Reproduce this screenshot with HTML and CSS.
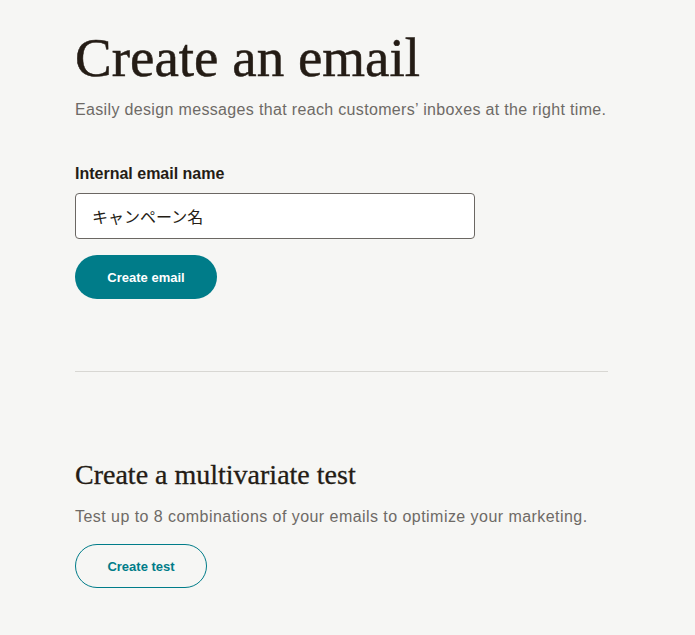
FILE: index.html
```html
<!DOCTYPE html>
<html lang="en">
<head>
<meta charset="utf-8">
<title>Create an email</title>
<link rel="stylesheet" href="styles.css">
</head>
<body>
<main class="page">
  <section class="create">
    <h1 class="title">Create an email</h1>
    <p class="lead">Easily design messages that reach customers’ inboxes at the right time.</p>
    <label class="label" for="name">Internal email name</label>
    <input class="field" id="name" type="text" value="キャンペーン名">
    <button class="btn btn-primary" type="button">Create email</button>
  </section>
  <hr class="divider">
  <section class="test">
    <h2 class="subtitle">Create a multivariate test</h2>
    <p class="lead lead-test">Test up to 8 combinations of your emails to optimize your marketing.</p>
    <button class="btn btn-outline" type="button">Create test</button>
  </section>
</main>
</body>
</html>
```
FILE: styles.css
```css
html, body {
  margin: 0;
  padding: 0;
  background: #f6f6f4;
}
body {
  font-family: "Liberation Sans", Arial, sans-serif;
  color: #241c15;
}
.page {
  width: 533px;
  padding: 30px 0 0 75px;
}
.create {
  display: flex;
  flex-direction: column;
  align-items: flex-start;
}
.title {
  font-family: "Liberation Serif", "Times New Roman", serif;
  font-weight: 400;
  font-size: 55px;
  line-height: 56px;
  margin: 0;
  color: #241c15;
  -webkit-text-stroke: 0.5px #241c15;
}
.lead {
  font-size: 16px;
  line-height: 24px;
  color: #6e6a66;
  margin: 12px 0 0;
  letter-spacing: 0.34px;
  white-space: nowrap;
}
.label {
  font-size: 16px;
  font-weight: 700;
  margin-top: 42px;
  line-height: 20px;
}
.field {
  box-sizing: border-box;
  width: 400px;
  height: 46px;
  margin-top: 9px;
  border: 1px solid #6b6763;
  border-radius: 4px;
  background: #fff;
  padding: 0 16px;
  font-family: "Liberation Sans", "Noto Sans CJK JP", sans-serif;
  font-size: 16px;
  color: #241c15;
}
.btn {
  box-sizing: border-box;
  height: 44px;
  border-radius: 22px;
  font-family: "Liberation Sans", Arial, sans-serif;
  font-size: 13px;
  font-weight: 700;
  cursor: pointer;
}
.btn-primary {
  margin-top: 16px;
  width: 142px;
  background: #007c89;
  color: #fff;
  border: none;
}
.btn-outline {
  margin-top: 15px;
  width: 132px;
  background: transparent;
  color: #007c89;
  border: 1px solid #007c89;
}
.divider {
  border: none;
  border-top: 1px solid #d8d7d3;
  margin: 72px 0 0;
}
.test {
  padding-top: 88px;
}
.subtitle {
  font-family: "Liberation Serif", "Times New Roman", serif;
  font-weight: 400;
  font-size: 28px;
  line-height: 30px;
  margin: 0;
  color: #241c15;
  -webkit-text-stroke: 0.3px #241c15;
}
.lead-test {
  margin-top: 15px;
  letter-spacing: 0.45px;
}
```
